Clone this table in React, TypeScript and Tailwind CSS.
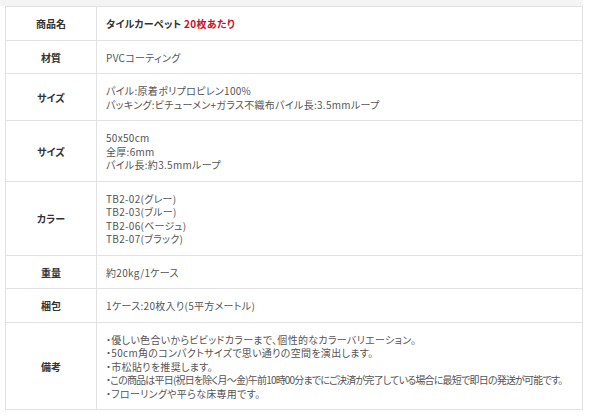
import React from "react";

type Line = { text: React.ReactNode; tight?: boolean };

const rows: { label: string; lines: Line[] }[] = [
  {
    label: "商品名",
    lines: [
      {
        text: (
          <span className="font-bold text-[#333]">
            タイルカーペット <span className="text-[#c8102e]">20枚あたり</span>
          </span>
        ),
      },
    ],
  },
  { label: "材質", lines: [{ text: "PVCコーティング" }] },
  {
    label: "サイズ",
    lines: [
      { text: "パイル:原着ポリプロピレン100%" },
      { text: "パッキング:ビチューメン+ガラス不織布パイル長:3.5mmループ" },
    ],
  },
  {
    label: "サイズ",
    lines: [
      { text: "50x50cm" },
      { text: "全厚:6mm" },
      { text: "パイル長:約3.5mmループ" },
    ],
  },
  {
    label: "カラー",
    lines: [
      { text: "TB2-02(グレー)" },
      { text: "TB2-03(ブルー)" },
      { text: "TB2-06(ベージュ)" },
      { text: "TB2-07(ブラック)" },
    ],
  },
  { label: "重量", lines: [{ text: "約20kg/1ケース" }] },
  { label: "梱包", lines: [{ text: "1ケース:20枚入り(5平方メートル)" }] },
  {
    label: "備考",
    lines: [
      { text: "・優しい色合いからビビッドカラーまで、個性的なカラーバリエーション。" },
      { text: "・50cm角のコンパクトサイズで思い通りの空間を演出します。" },
      { text: "・市松貼りを推奨します。" },
      {
        text: "・この商品は平日(祝日を除く月～金)午前10時00分までにご決済が完了している場合に最短で即日の発送が可能です。",
        tight: true,
      },
      { text: "・フローリングや平らな床専用です。" },
    ],
  },
];

export default function App() {
  return (
    <div
      className="w-[600px] h-[420px] bg-white overflow-hidden text-[10px] text-[#555]"
      style={{ fontFamily: '"Noto Sans CJK JP", sans-serif', fontFeatureSettings: '"palt"' }}
    >
      <div className="h-[6px] w-[583px] bg-[#f4f4f4]" />
      <table className="ml-[5px] w-[578px] table-fixed border-collapse">
        <colgroup>
          <col className="w-[91px]" />
          <col />
        </colgroup>
        <tbody>
          {rows.map((r, i) => (
            <tr key={i}>
              <th className="border border-[#e2e2e2] pt-[10px] pb-[9px] align-middle text-center font-bold text-[#333] leading-[13.5px]">
                {r.label}
              </th>
              <td className="border border-[#e2e2e2] pt-[10px] pb-[9px] pl-[9px] text-left align-middle leading-[13.5px]">
                {r.lines.map((l, j) => (
                  <div
                    key={j}
                    className={
                      l.tight
                        ? "whitespace-nowrap tracking-[-0.8px]"
                        : "whitespace-nowrap tracking-[0.3px]"
                    }
                  >
                    {l.text}
                  </div>
                ))}
              </td>
            </tr>
          ))}
        </tbody>
      </table>
    </div>
  );
}
